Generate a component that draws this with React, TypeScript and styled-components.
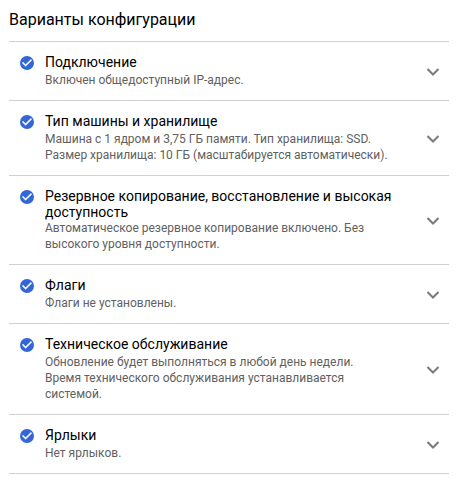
import React from "react";
import styled, { createGlobalStyle } from "styled-components";

const GlobalStyle = createGlobalStyle`
  body { margin: 0; background: #fff; font-family: Roboto, "Noto Sans", sans-serif; }
`;

const Panel = styled.section`
  box-sizing: border-box;
  width: 472px;
  min-height: 484px;
  padding: 9px 23px 10px 9px;
`;

const Heading = styled.h2`
  margin: 0;
  height: 32px;
  font-size: 16px;
  line-height: 21px;
  font-weight: 400;
  color: #000;
`;

const List = styled.div`
  border-top: 1px solid #d0d0d0;
`;

const Row = styled.div`
  display: flex;
  align-items: center;
  box-sizing: border-box;
  padding: 12px 9px 12px 11px;
  border-bottom: 1px solid #d0d0d0;
`;

const CheckIcon = styled.svg`
  width: 14px;
  height: 14px;
  flex: none;
  align-self: flex-start;
  margin-top: 2px;
`;

const Copy = styled.div`
  flex: 1;
  margin-left: 11px;
  white-space: nowrap;
`;

const Title = styled.div`
  min-height: 18px;
  font-size: 14px;
  line-height: 16px;
  color: #000;
`;

const Detail = styled.div`
  font-size: 12px;
  line-height: 16px;
  color: #616161;
`;

const Chevron = styled.svg`
  width: 14px;
  height: 9px;
  flex: none;
  margin-top: 1px;
`;

const options: { title: string[]; detail: string[] }[] = [
  { title: ["Подключение"], detail: ["Включен общедоступный IP-адрес."] },
  {
    title: ["Тип машины и хранилище"],
    detail: [
      "Машина с 1 ядром и 3,75 ГБ памяти. Тип хранилища: SSD.",
      "Размер хранилища: 10 ГБ (масштабируется автоматически).",
    ],
  },
  {
    title: ["Резервное копирование, восстановление и высокая", "доступность"],
    detail: ["Автоматическое резервное копирование включено. Без", "высокого уровня доступности."],
  },
  { title: ["Флаги"], detail: ["Флаги не установлены."] },
  {
    title: ["Техническое обслуживание"],
    detail: [
      "Обновление будет выполняться в любой день недели.",
      "Время технического обслуживания устанавливается",
      "системой.",
    ],
  },
  { title: ["Ярлыки"], detail: ["Нет ярлыков."] },
];

const Lines = ({ lines }: { lines: string[] }) => (
  <>
    {lines.map((line, i) => (
      <React.Fragment key={line}>
        {i > 0 && <br />}
        {line}
      </React.Fragment>
    ))}
  </>
);

export default function App() {
  return (
    <Panel>
      <GlobalStyle />
      <Heading>Варианты конфигурации</Heading>
      <List>
        {options.map((option) => (
          <Row key={option.title[0]}>
            <CheckIcon viewBox="2 2 20 20">
              <circle cx="12" cy="12" r="10" fill="#3367d6" />
              <path d="M10 17l-5-5 1.41-1.41L10 14.17l7.59-7.59L19 8z" fill="#fff" stroke="#fff" strokeWidth="0.3" />
            </CheckIcon>
            <Copy>
              <Title><Lines lines={option.title} /></Title>
              <Detail><Lines lines={option.detail} /></Detail>
            </Copy>
            <Chevron viewBox="0 0 14 9">
              <path d="M1.5 1.9 7 7.4 12.5 1.9" fill="none" stroke="#7b7b7b" strokeWidth="2.1" />
            </Chevron>
          </Row>
        ))}
      </List>
    </Panel>
  );
}
